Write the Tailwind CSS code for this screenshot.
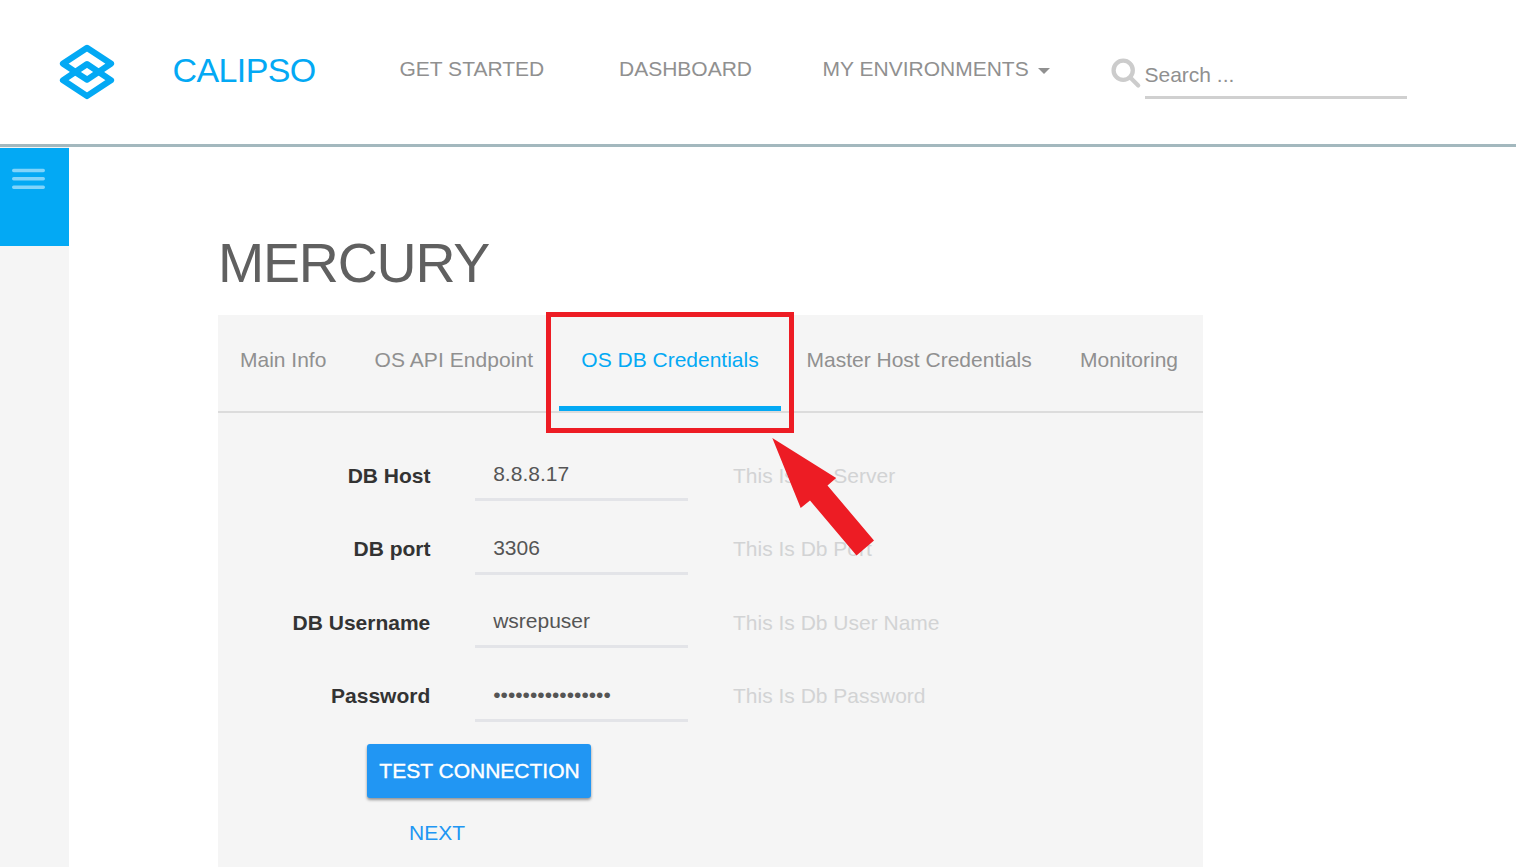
<!DOCTYPE html>
<html lang="en">
<head>
<meta charset="utf-8">
<title>Calipso</title>
<script src="https://cdn.jsdelivr.net/npm/@tailwindcss/browser@4"></script>
</head>
<body class="h-[867px] overflow-hidden bg-white font-['Liberation_Sans',Arial,sans-serif] text-[21px] leading-6 whitespace-nowrap text-[#909090]">
<header class="flex h-[147px] items-start border-b-[3px] border-[#a3b8be]">
  <svg class="mt-[44px] ml-[59px] h-[56px] w-[56px]" viewBox="0 0 56 56" fill="none" stroke="#03a9f4" stroke-width="6.2" stroke-linejoin="round">
    <path d="M16.5 28 L4 19.6 L28 3.9 L52 19.6 L28 35.7 L16 27.8"/>
    <path d="M28 20.1 L52 36.2 L28 52 L4 36.2 Z"/>
  </svg>
  <div class="mt-[51px] ml-[57.5px] w-[227px] text-[34px] leading-[38px] tracking-[-0.6px] text-[#03a9f4]">CALIPSO</div>
  <nav class="mt-[57px] flex">
    <a class="w-[219.5px]">GET STARTED</a>
    <a class="w-[203.5px]">DASHBOARD</a>
    <a class="flex w-[288px] items-start">MY ENVIRONMENTS
      <svg class="mt-[11px] ml-[9px] h-[6px] w-[12px]" viewBox="0 0 12 6" fill="#909090"><path d="M0 0H12L6 6Z"/></svg>
    </a>
  </nav>
  <svg class="mt-[58px] h-[32px] w-[34px]" viewBox="0 0 34 32" fill="none" stroke="#ccc"><circle cx="12.2" cy="12.2" r="9.6" stroke-width="4.3"/><path d="M19.5 19.8L27.2 27.5" stroke-width="4.2" stroke-linecap="round"/></svg>
  <div class="mt-[63px] h-[36px] w-[262px] border-b-[3px] border-[#d0d0d0]">Search ...</div>
</header>
<div class="flex h-[720px]">
  <aside class="w-[69px] bg-[#f5f5f5] pt-px">
    <div class="h-[98.4px] bg-[#03a9f4] pt-[20px] pl-[12px]">
      <svg class="h-[24px] w-[33px]" viewBox="0 0 33 24" stroke="#80d4fa" stroke-width="3.4" stroke-linecap="round"><path d="M1.7 2.5H31.3M1.7 10.8H31.3M1.7 19.2H31.3"/></svg>
    </div>
  </aside>
  <main class="ml-[149px] w-[985px]">
    <h1 class="h-[168px] pt-[86px] text-[55.5px] leading-[60px] tracking-[-1.2px] text-[#606060]">MERCURY</h1>
    <section class="relative h-[552px] bg-[#f5f5f5]">
      <div class="flex h-[98px] border-b-2 border-[#dcdcdc] pl-[22px] pt-[33px]">
        <div class="w-[134.5px]">Main Info</div>
        <div class="w-[184.5px] tracking-[0.07px]">OS API Endpoint</div>
        <div class="flex w-[222px] justify-center border-b-5 border-[#03a9f4] text-[#03a9f4]">OS DB Credentials</div>
        <div class="w-[299px] pl-[25.5px]">Master Host Credentials</div>
        <div>Monitoring</div>
      </div>
      <form class="pt-[30px]">
        <div class="flex h-[73.6px]">
          <label class="mt-[21px] w-[212.5px] text-right font-bold text-[#333]">DB Host</label>
          <div class="mt-[19px] ml-[44.5px] h-[39px] w-[213px] border-b-3 border-[#e3e4e8] pl-[18.2px] text-[#555]">8.8.8.17</div>
          <div class="mt-[21px] ml-[45px] text-[#d2d3d4]">This Is Db Server</div>
        </div>
        <div class="flex h-[73.6px]">
          <label class="mt-[20.4px] w-[212.5px] text-right font-bold text-[#333]">DB port</label>
          <div class="mt-[19.4px] ml-[44.5px] h-[39px] w-[213px] border-b-3 border-[#e3e4e8] pl-[18.2px] text-[#555]">3306</div>
          <div class="mt-[20.4px] ml-[45px] text-[#d2d3d4]">This Is Db Port</div>
        </div>
        <div class="flex h-[73.6px]">
          <label class="mt-[21px] w-[212.3px] text-right font-bold text-[#333]">DB Username</label>
          <div class="mt-[19px] ml-[44.7px] h-[39px] w-[213px] border-b-3 border-[#e3e4e8] pl-[18.2px] text-[#555]">wsrepuser</div>
          <div class="mt-[21px] ml-[45px] text-[#d2d3d4]">This Is Db User Name</div>
        </div>
        <div class="flex h-[73.6px]">
          <label class="mt-[20.2px] w-[212.3px] text-right font-bold text-[#333]">Password</label>
          <div class="mt-[19px] ml-[44.7px] h-[39px] w-[213px] border-b-3 border-[#e3e4e8] pl-[18.2px] text-[#555]">••••••••••••••••</div>
          <div class="mt-[20.2px] ml-[45px] text-[#d2d3d4]">This Is Db Password</div>
        </div>
      </form>
      <button type="button" class="mt-[6.6px] ml-[149px] block h-[54px] w-[224px] rounded-[3px] bg-[#2196f3] pl-px text-center text-white shadow-[0_2px_3px_rgba(0,0,0,0.4)] [-webkit-text-stroke:0.4px_white]">TEST CONNECTION</button>
      <a class="mt-[23px] ml-[191px] block text-[#2196f3]">NEXT</a>
      <div class="absolute top-[-3px] left-[328px] h-[121px] w-[248px] border-5 border-[#ed1c24]"></div>
      <svg class="absolute top-[122px] left-[553px] h-[120px] w-[105px]" viewBox="771 437 105 120" fill="#ed1c24"><path d="M772.3 438L836.2 478L827.5 485.5L874 540.5L856.5 555.5L810 500.5L800.7 508Z"/></svg>
    </section>
  </main>
</div>
</body>
</html>
